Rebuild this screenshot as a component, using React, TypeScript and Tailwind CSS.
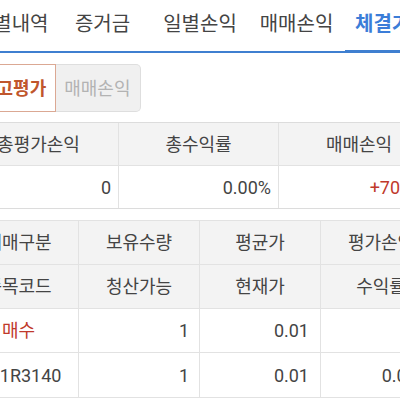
import React from 'react';

const font = { fontFamily: "Roboto, 'Noto Sans CJK KR', sans-serif" };

const tabs = [
  { label: '종목별내역', w: 'w-[101px]' },
  { label: '증거금', w: 'w-[99px]' },
  { label: '일별손익', w: 'w-[96px]' },
  { label: '매매손익', w: 'w-[97px]' },
];

const cols = 'grid grid-cols-[120px_121px_121px_121px]';
const cell = 'flex items-center border-r border-[#e2e2e2]';

export default function App() {
  return (
    <div className="w-[400px] h-[400px] overflow-hidden bg-white text-[#444]" style={font}>
      {/* tab bar */}
      <div className="flex ml-[-48px] w-[560px]">
        {tabs.map((t) => (
          <div
            key={t.label}
            className={`${t.w} h-[53px] shrink-0 flex items-center justify-center pb-[4px] border-b-2 border-[#3f7fd0] text-[20px] text-[#444]`}
          >
            {t.label}
          </div>
        ))}
        <div className="w-[110px] h-[53px] shrink-0 flex items-center pl-[10px] pb-[3px] border-b-[3px] border-[#3f7fd0] text-[20px] font-bold text-[#3b7dd8]">
          체결기준
        </div>
      </div>

      {/* segmented buttons */}
      <div className="flex ml-[-30px] mt-[11px] h-[48px]">
        <div className="flex items-center px-[9px] border border-[#dba893] bg-white text-[18px] font-bold text-[#c0562c]">
          잔고평가
        </div>
        <div className="flex items-center pl-[8px] pr-[9px] border border-l-0 border-[#dedede] rounded-r-[5px] bg-[#f0f0f0] text-[18px] text-[#b3b3b3]">
          매매손익
        </div>
      </div>

      {/* summary table */}
      <div className="mt-[10px] ml-[-41px] w-[520px] border-t border-[#dcdcdc] text-[18px]">
        <div className="grid grid-cols-[160px_160px_160px] h-[43px] bg-[#f3f3f3] border-b border-[#e2e2e2]">
          <div className="flex items-center justify-center border-r border-[#e2e2e2]">총평가손익</div>
          <div className="flex items-center justify-center border-r border-[#e2e2e2]">총수익률</div>
          <div className="flex items-center justify-center">매매손익</div>
        </div>
        <div className="grid grid-cols-[160px_160px_160px] h-[43px] border-b border-[#dcdcdc]">
          <div className="flex items-center justify-end pr-[7px] border-r border-[#e2e2e2]">0</div>
          <div className="flex items-center justify-end pr-[7px] border-r border-[#e2e2e2]">0.00%</div>
          <div className="flex items-center justify-end pr-[5px] text-[#c0392b]">+70,000</div>
        </div>
      </div>

      {/* positions table */}
      <div className="mt-[11px] ml-[-41px] w-[520px] border-t border-[#e2e2e2] text-[18px]">
        {[
          ['매매구분', '보유수량', '평균가', '평가손익'],
          ['종목코드', '청산가능', '현재가', '수익률'],
        ].map((r, i) => (
          <div key={i} className={`${cols} h-[44px] bg-[#f3f3f3] border-b border-[#e2e2e2]`}>
            {r.map((c) => (
              <div key={c} className={`${cell} justify-center`}>
                {c}
              </div>
            ))}
          </div>
        ))}
        <div className={`${cols} h-[44px] border-b border-[#e2e2e2]`}>
          <div className={`${cell} justify-center text-[#c0392b]`}>매수</div>
          <div className={`${cell} justify-end pr-[10px]`}>1</div>
          <div className={`${cell} justify-end pr-[11px]`}>0.01</div>
          <div className={`${cell} justify-end pr-[11px]`}>0</div>
        </div>
        <div className={`${cols} h-[45px] border-b border-[#e2e2e2]`}>
          <div className={`${cell} justify-center pl-[4px]`}>101R3140</div>
          <div className={`${cell} justify-end pr-[10px]`}>1</div>
          <div className={`${cell} justify-end pr-[11px]`}>0.01</div>
          <div className={`${cell} justify-end pr-[11px]`}>0.00%</div>
        </div>
      </div>
    </div>
  );
}
